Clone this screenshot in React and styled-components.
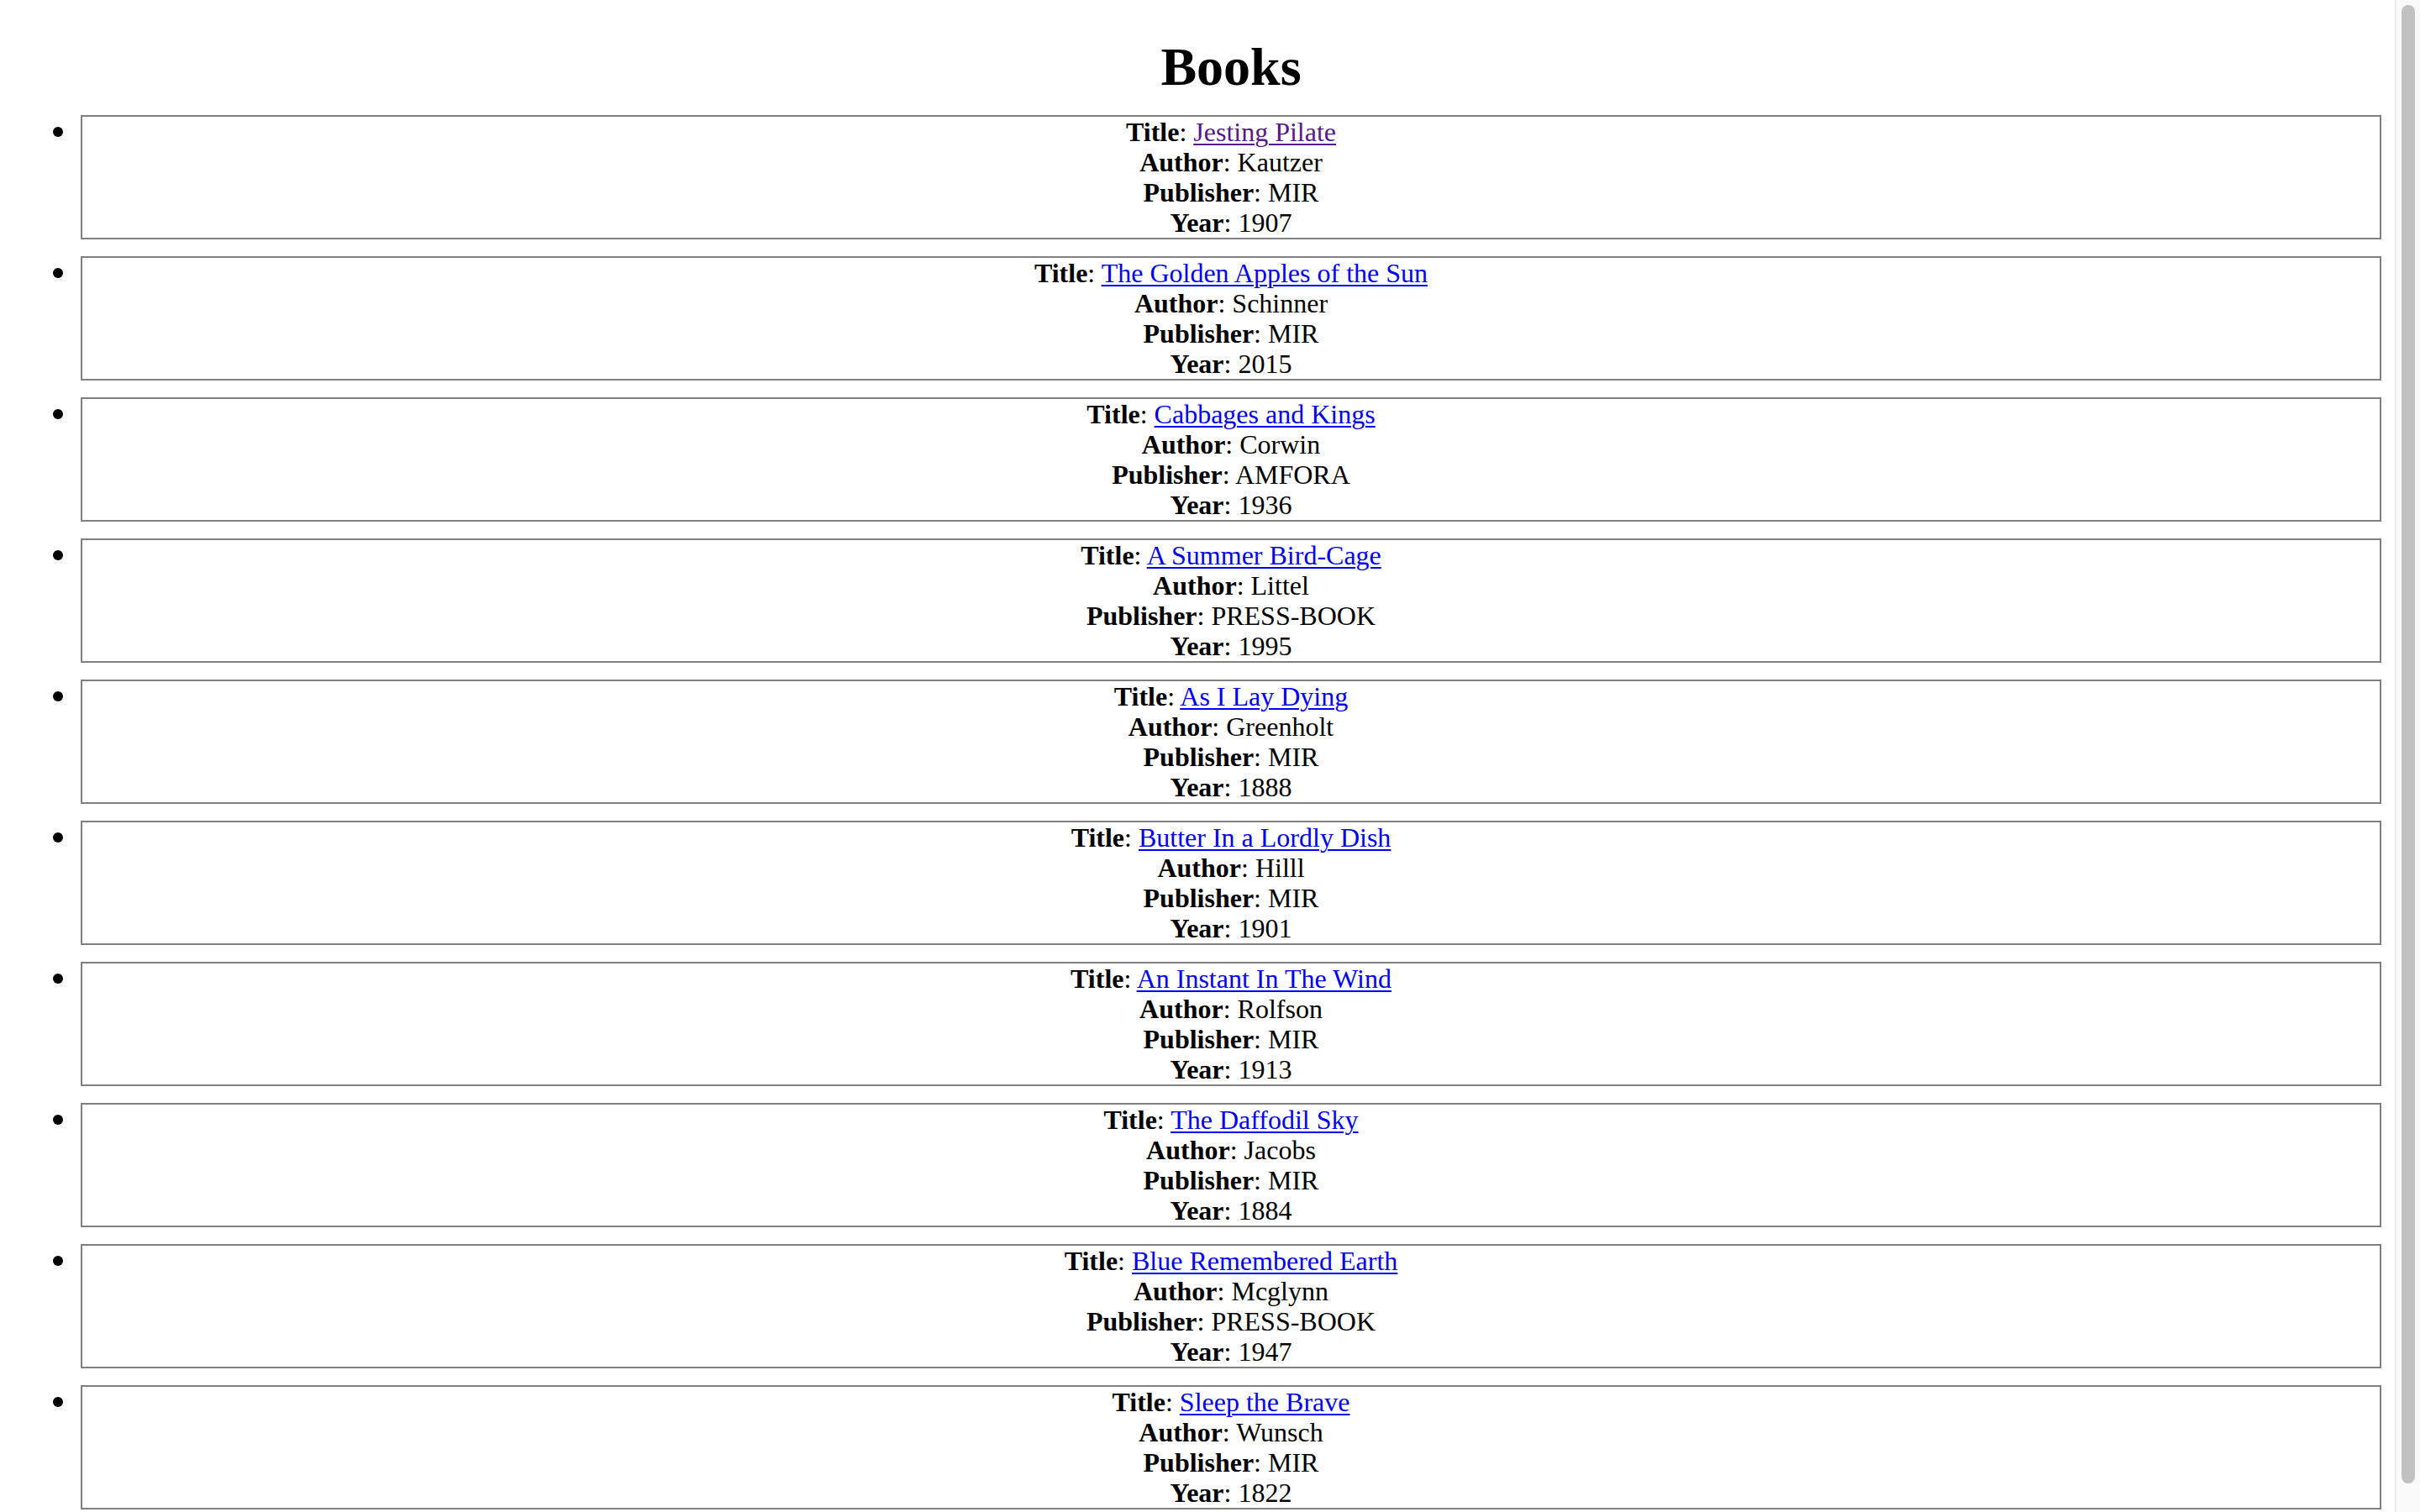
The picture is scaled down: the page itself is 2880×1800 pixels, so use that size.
import React from "react";
import styled, { createGlobalStyle } from "styled-components";

const GlobalStyle = createGlobalStyle`
  html, body {
    margin: 0;
    padding: 0;
    height: 100%;
    overflow: hidden;
    background: #ffffff;
  }
  body {
    font-family: "Liberation Serif", "Times New Roman", serif;
    font-size: 32px;
    color: #000000;
  }
`;

const Viewport = styled.div`
  display: flex;
  height: 100vh;
  overflow: hidden;
`;

const Page = styled.main`
  flex: 1;
  min-width: 0;
  padding: 0 16px;
  overflow: hidden;
`;

const Heading = styled.h1`
  margin: 43px 0 0 80px;
  font-size: 64px;
  line-height: 74px;
  font-weight: bold;
  text-align: center;
`;

const List = styled.ul`
  list-style: none;
  margin: 0;
  padding: 0;
`;

const Item = styled.li`
  display: flex;
  align-items: flex-start;
  margin-top: 20px;
`;

const BulletCell = styled.span`
  flex: 0 0 80px;
  display: flex;
  padding-left: 47px;
  padding-top: 14px;
  box-sizing: border-box;
`;

const Dot = styled.span`
  width: 12px;
  height: 12px;
  border-radius: 50%;
  background: #000000;
`;

const Card = styled.div`
  flex: 1;
  border: 2px solid #808080;
  text-align: center;
  line-height: 36px;
`;

const Line = styled.div``;

const Label = styled.b`
  font-weight: bold;
`;

const BookLink = styled.a`
  color: ${(p) => (p.$visited ? "#551A8B" : "#0000EE")};
  text-decoration: underline;
  text-decoration-thickness: 2px;
  text-underline-offset: 3px;
`;

const ScrollTrack = styled.div`
  flex: 0 0 30px;
  box-sizing: border-box;
  height: 100vh;
  background: #fafafa;
  border-left: 2px solid #ebebeb;
  padding: 6px 6px 0 6px;
`;

const ScrollThumb = styled.div`
  width: 16px;
  border-radius: 8px;
  background: #c1c1c1;
`;

const books = [
  { title: "Jesting Pilate", author: "Kautzer", publisher: "MIR", year: 1907, visited: true },
  { title: "The Golden Apples of the Sun", author: "Schinner", publisher: "MIR", year: 2015 },
  { title: "Cabbages and Kings", author: "Corwin", publisher: "AMFORA", year: 1936 },
  { title: "A Summer Bird-Cage", author: "Littel", publisher: "PRESS-BOOK", year: 1995 },
  { title: "As I Lay Dying", author: "Greenholt", publisher: "MIR", year: 1888 },
  { title: "Butter In a Lordly Dish", author: "Hilll", publisher: "MIR", year: 1901 },
  { title: "An Instant In The Wind", author: "Rolfson", publisher: "MIR", year: 1913 },
  { title: "The Daffodil Sky", author: "Jacobs", publisher: "MIR", year: 1884 },
  { title: "Blue Remembered Earth", author: "Mcglynn", publisher: "PRESS-BOOK", year: 1947 },
  { title: "Sleep the Brave", author: "Wunsch", publisher: "MIR", year: 1822 },
];

export default function App() {
  return (
    <>
      <GlobalStyle />
      <Viewport>
        <Page>
          <Heading>Books</Heading>
          <List>
            {books.map((b) => (
              <Item key={b.title}>
                <BulletCell>
                  <Dot />
                </BulletCell>
                <Card>
                  <Line>
                    <Label>Title</Label>:{" "}
                    <BookLink href="#" $visited={b.visited} onClick={(e) => e.preventDefault()}>
                      {b.title}
                    </BookLink>
                  </Line>
                  <Line>
                    <Label>Author</Label>: {b.author}
                  </Line>
                  <Line>
                    <Label>Publisher</Label>: {b.publisher}
                  </Line>
                  <Line>
                    <Label>Year</Label>: {b.year}
                  </Line>
                </Card>
              </Item>
            ))}
          </List>
        </Page>
        <ScrollTrack>
          <ScrollThumb style={{ height: "1760px" }} />
        </ScrollTrack>
      </Viewport>
    </>
  );
}
